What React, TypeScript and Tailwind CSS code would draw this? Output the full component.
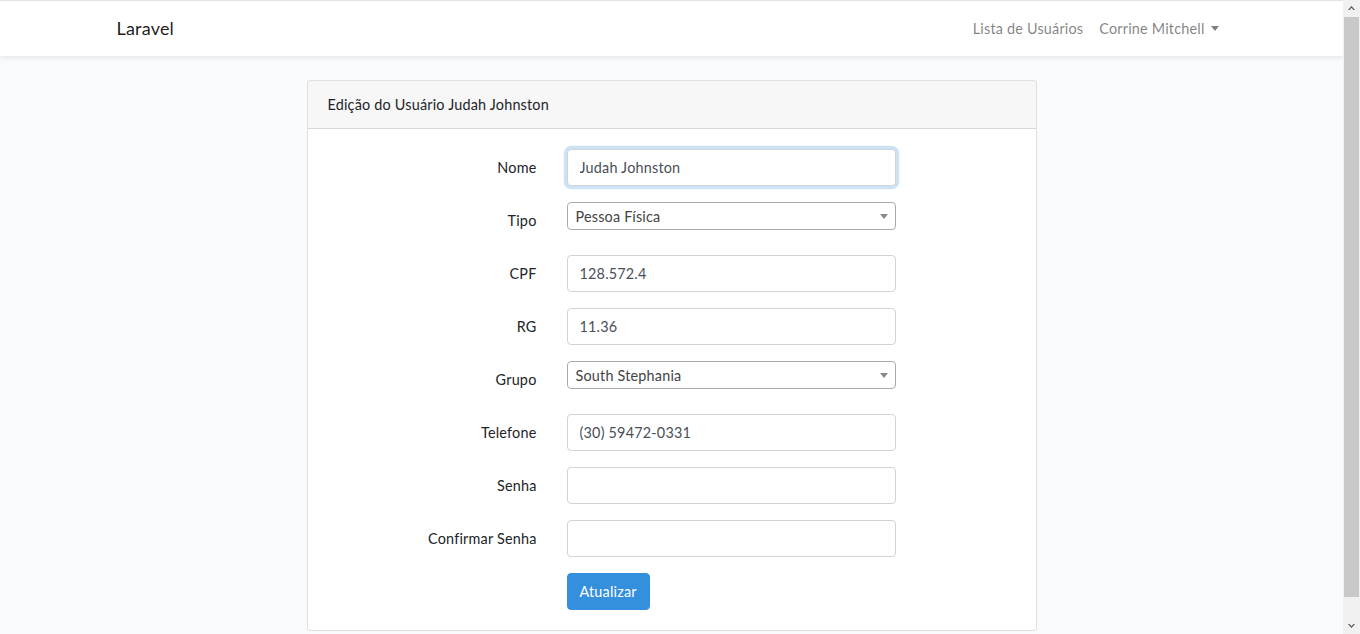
import { useState } from "react";

const font = { fontFamily: "Lato, 'Noto Sans', sans-serif" };

function Select2({ value }: { value: string }) {
  return (
    <div className="relative w-[329px] h-[28px] border border-[#aaa] rounded-[4px] bg-white">
      <span className="block pl-[8px] pr-[20px] pt-[1px] leading-[26px] text-[#444] text-[14.4px] truncate">{value}</span>
      <span className="absolute right-[7px] top-[11px] w-0 h-0 border-t-[5px] border-t-[#888] border-x-[4px] border-x-transparent" />
    </div>
  );
}

function Field({
  label,
  children,
}: {
  label: string;
  children: React.ReactNode;
}) {
  return (
    <div className="flex items-start mb-[16px]">
      <label className="w-[209px] shrink-0 text-right py-[7px] leading-[23px] text-[#212529]">{label}</label>
      <div className="ml-[30px]">{children}</div>
    </div>
  );
}

const inputCls =
  "block w-[329px] h-[37px] px-[12px] py-[6px] text-[14.4px] leading-[23px] tracking-[0.2px] text-[#495057] bg-white border border-[#ced4da] rounded-[4px] outline-none";

// the browser scrollbar visible in the screenshot
function Scrollbar() {
  return (
    <div className="sticky top-0 w-[17px] h-screen shrink-0 bg-[#f1f1f1] flex flex-col items-center">
      <svg width="17" height="17" viewBox="0 0 17 17">
        <path d="M5 10 L8.5 6 L12 10 L10.5 10 L8.5 7.8 L6.5 10 Z" fill="#505050" />
      </svg>
      <div className="flex-1 w-[15px] bg-[#c9c9c9]" />
      <div className="h-[20px]" />
      <svg width="17" height="17" viewBox="0 0 17 17">
        <path d="M5 7 L8.5 11 L12 7 L10.5 7 L8.5 9.2 L6.5 7 Z" fill="#505050" />
      </svg>
    </div>
  );
}

export default function App() {
  const [form, setForm] = useState({
    nome: "Judah Johnston",
    cpf: "128.572.4",
    rg: "11.36",
    telefone: "(30) 59472-0331",
    senha: "",
    confirmar: "",
  });

  return (
    <div className="flex items-start bg-[#f8fafc]">
      <div className="flex-1 min-w-0 min-h-screen text-[14.4px] leading-[1.6] tracking-[0.2px] text-[#212529]" style={font}>
        <nav className="bg-white border-t border-[#e3e3e3] shadow-[0_2px_4px_rgba(0,0,0,0.075)]">
          <div className="max-w-[1140px] mx-auto px-[15px] h-[55px] flex items-center justify-between">
            <a className="text-[18px] text-[rgba(0,0,0,0.9)] py-[5px]">Laravel</a>
            <ul className="flex items-center">
              <li>
                <a className="block px-[8px] py-[8px] text-[rgba(0,0,0,0.5)]">Lista de Usuários</a>
              </li>
              <li>
                <a className="flex items-center px-[8px] py-[8px] text-[rgba(0,0,0,0.5)]">
                  Corrine Mitchell
                  <span className="ml-[6px] w-0 h-0 border-t-[5px] border-t-[rgba(0,0,0,0.5)] border-x-[4.5px] border-x-transparent" />
                </a>
              </li>
            </ul>
          </div>
        </nav>

        <main className="py-[24px]">
          <div className="w-[730px] mx-auto bg-white border border-[rgba(0,0,0,0.125)] rounded-[4px]">
            <div className="px-[20px] py-[12px] leading-[23px] bg-[rgba(0,0,0,0.03)] border-b border-[rgba(0,0,0,0.125)]">
              Edição do Usuário Judah Johnston
            </div>
            <div className="p-[20px]">
              <Field label="Nome">
                <input
                  className={inputCls + " border-[#a1cbef] shadow-[0_0_0_3.2px_rgba(52,144,220,0.25)]"}
                  value={form.nome}
                  onChange={(e) => setForm({ ...form, nome: e.target.value })}
                />
              </Field>
              <Field label="Tipo">
                <Select2 value="Pessoa Física" />
              </Field>
              <Field label="CPF">
                <input className={inputCls} value={form.cpf} onChange={(e) => setForm({ ...form, cpf: e.target.value })} />
              </Field>
              <Field label="RG">
                <input className={inputCls} value={form.rg} onChange={(e) => setForm({ ...form, rg: e.target.value })} />
              </Field>
              <Field label="Grupo">
                <Select2 value="South Stephania" />
              </Field>
              <Field label="Telefone">
                <input
                  className={inputCls}
                  value={form.telefone}
                  onChange={(e) => setForm({ ...form, telefone: e.target.value })}
                />
              </Field>
              <Field label="Senha">
                <input
                  type="password"
                  className={inputCls}
                  value={form.senha}
                  onChange={(e) => setForm({ ...form, senha: e.target.value })}
                />
              </Field>
              <Field label="Confirmar Senha">
                <input
                  type="password"
                  className={inputCls}
                  value={form.confirmar}
                  onChange={(e) => setForm({ ...form, confirmar: e.target.value })}
                />
              </Field>
              <div className="flex">
                <div className="ml-[239px]">
                  <button className="h-[37px] px-[12px] leading-[23px] tracking-[0.2px] text-white bg-[#3490dc] border border-[#3490dc] rounded-[4px]">
                    Atualizar
                  </button>
                </div>
              </div>
            </div>
          </div>
        </main>
      </div>
      <Scrollbar />
    </div>
  );
}
